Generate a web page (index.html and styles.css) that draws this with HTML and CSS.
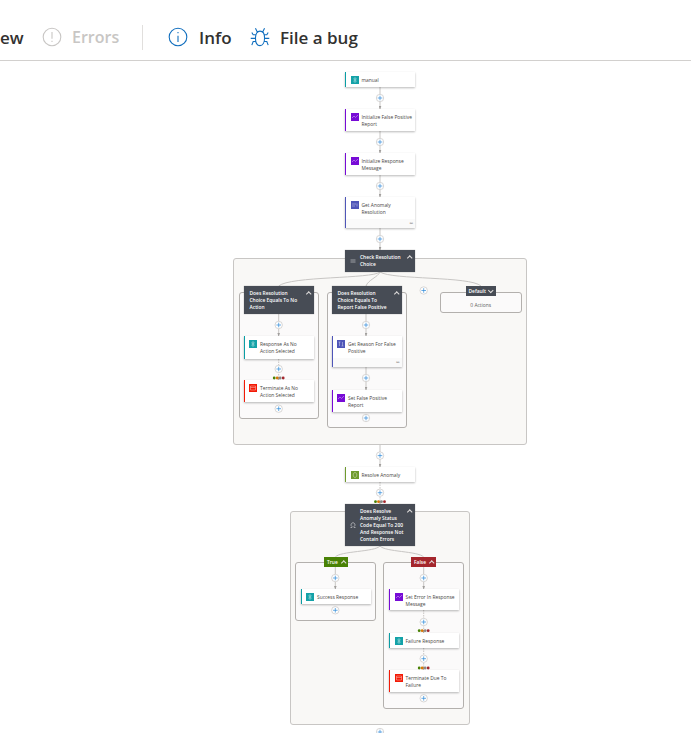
FILE: index.html
```html
<!DOCTYPE html>
<html lang="en">
<head>
    <meta charset="UTF-8">
    <meta name="viewport" content="width=device-width, initial-scale=1.0">
    <title>Logic app designer</title>
    <link rel="stylesheet" href="styles.css">
</head>
<body>
    <header class="toolbar">
        <span class="tool tool-cut">ew</span>
        <span class="tool tool-errors">
            <svg class="tool-icon" viewBox="0 0 22 22"><circle cx="11" cy="11" r="9.7"/><path d="M11 5.500v7.500M11 15.200v1.400"/></svg>
            Errors
        </span>
        <span class="divider"></span>
        <span class="tool tool-info">
            <svg class="tool-icon" viewBox="0 0 22 22"><circle cx="11" cy="11" r="9.7"/><path d="M11 9.500v7M11 5.600v1.400"/></svg>
            Info
        </span>
        <span class="tool tool-bug">
            <svg class="tool-icon bug-icon" viewBox="0 0 22 24"><path d="M11 5.500c3 0 5 3 5 7.500 0 5-2 8.500-5 8.500s-5-3.500-5-8.500c0-4.500 2-7.500 5-7.500zM8 6.500 6 2.500M14 6.500l2-4M6 9.500H3.500L2 7M16 9.500h2.500L20 7M5.800 13.500H.8M16.200 13.500h5M6.500 17H3.500L2 21M15.500 17h3L20 21"/></svg>
            File a bug
        </span>
    </header>

    <main class="canvas">
        <div class="scope scope-switch"></div>
        <div class="branch branch-noaction"></div>
        <div class="branch branch-report"></div>
        <div class="branch branch-default"><span class="empty-note">0 Actions</span></div>
        <div class="scope scope-cond"></div>
        <div class="branch branch-true"></div>
        <div class="branch branch-false"></div>

        <svg class="wires" viewBox="0 61 691 672">
            <defs>
                <marker id="arrow" markerWidth="4" markerHeight="3" refX="3.500" refY="1.500" orient="auto" markerUnits="userSpaceOnUse">
                    <path d="M0 0 4 1.500 0 3z" fill="#a19f9d"/>
                </marker>
                <g id="plus">
                    <circle r="3.700" fill="#fff" stroke="#c8c6c4" stroke-width=".7"/>
                    <path d="M-2.300 0h4.600M0-2.300v4.600" stroke="#2b88d8" stroke-width=".7"/>
                </g>
                <g id="status">
                    <circle cx="-4.500" r="1.400" fill="#498205"/>
                    <circle cx="-1.500" r="1.400" fill="#d97706"/>
                    <circle cx="1.500" r="1.400" fill="#8a8886"/>
                    <circle cx="4.500" r="1.400" fill="#a4262c"/>
                </g>
            </defs>
            <g class="wire">
                <path marker-end="url(#arrow)" d="M380 87V109"/>
                <path marker-end="url(#arrow)" d="M380 131V153"/>
                <path marker-end="url(#arrow)" d="M380 175V197"/>
                <path marker-end="url(#arrow)" d="M380 228V250"/>
                <path d="M380 272C372 279 290 276 278.700 286"/>
                <path d="M380 272C378 277 368 280 366 286"/>
                <path d="M380 272C392 280 470 276 481 286"/>
                <path marker-end="url(#arrow)" d="M278.700 314V336"/>
                <path marker-end="url(#arrow)" d="M366 314V336"/>
                <path marker-end="url(#arrow)" d="M366 367V390"/>
                <path d="M380 445V467" marker-end="url(#arrow)"/>
                <path d="M380 546C375 552 340 551 335.300 557"/>
                <path d="M380 546C385 552 418 551 423.700 557"/>
                <path marker-end="url(#arrow)" d="M335.300 567V589"/>
                <path marker-end="url(#arrow)" d="M423.700 567V589"/>
                <path class="dashed" marker-end="url(#arrow)" d="M278.700 359V380"/>
                <path class="dashed" marker-end="url(#arrow)" d="M380 482V504"/>
                <path class="dashed" marker-end="url(#arrow)" d="M423.700 610V633"/>
                <path class="dashed" marker-end="url(#arrow)" d="M423.700 648V670"/>
            </g>
            <use href="#plus" x="380" y="98"/>
            <use href="#plus" x="380" y="142"/>
            <use href="#plus" x="380" y="186"/>
            <use href="#plus" x="380" y="239"/>
            <use href="#plus" x="278.700" y="325"/>
            <use href="#plus" x="366" y="325"/>
            <use href="#plus" x="423.700" y="290.500"/>
            <use href="#plus" x="278.700" y="369"/>
            <use href="#plus" x="278.700" y="408.700"/>
            <use href="#plus" x="366" y="378"/>
            <use href="#plus" x="366" y="418"/>
            <use href="#plus" x="380" y="455.600"/>
            <use href="#plus" x="380" y="492.700"/>
            <use href="#plus" x="335.300" y="578"/>
            <use href="#plus" x="335.300" y="610.300"/>
            <use href="#plus" x="423.700" y="578"/>
            <use href="#plus" x="423.700" y="622"/>
            <use href="#plus" x="423.700" y="658.700"/>
            <use href="#plus" x="423.700" y="698.300"/>
            <use href="#plus" x="380" y="732"/>
            <use href="#status" x="278.700" y="378"/>
            <use href="#status" x="380" y="501.700"/>
            <use href="#status" x="423.700" y="630.700"/>
            <use href="#status" x="423.700" y="668"/>
        </svg>

        <div class="node teal n-manual"><span class="icon"><svg viewBox="0 0 8 8"><path d="M3 2h2v1.500h-2zM3 4.500h2v1.500h-2z"/></svg></span><span class="title">manual</span></div>
        <div class="node purple n-initreport"><span class="icon"><svg viewBox="0 0 8 8"><path d="M1 5 3 3l1.500 1.500L7 2"/></svg></span><span class="title">Initialize False Positive Report</span></div>
        <div class="node purple n-initmsg"><span class="icon"><svg viewBox="0 0 8 8"><path d="M1 5 3 3l1.500 1.500L7 2"/></svg></span><span class="title">Initialize Response Message</span></div>
        <div class="node indigo n-anomaly"><span class="icon"><svg viewBox="0 0 8 8"><path d="M1 3h4M1 5h3M6 2.500v3"/></svg></span><span class="title">Get Anomaly Resolution</span><span class="foot">∞</span></div>

        <div class="card n-switch"><svg class="card-icon" viewBox="0 0 6 6"><path d="M.5 2h5M.5 4h5"/></svg><span class="title">Check Resolution Choice</span><span class="chev"></span></div>
        <div class="card plain n-noaction"><span class="title">Does Resolution Choice Equals To No Action</span><span class="chev"></span></div>
        <div class="card plain n-report"><span class="title">Does Resolution Choice Equals To Report False Positive</span><span class="chev"></span></div>
        <div class="tag dark n-default">Default<span class="chev down"></span></div>

        <div class="node teal n-resp"><span class="icon"><svg viewBox="0 0 8 8"><path d="M3 2h2v1.500h-2zM3 4.500h2v1.500h-2z"/></svg></span><span class="title">Response As No Action Selected</span></div>
        <div class="node red n-term"><span class="icon"><svg viewBox="0 0 8 8"><path d="M1.500 2h5v4h-5zM1.500 3.500h5"/></svg></span><span class="title">Terminate As No Action Selected</span></div>
        <div class="node indigo n-reason"><span class="icon"><svg viewBox="0 0 8 8"><path d="M2.500 2v4M5.500 2v4M1.500 2h2M4.500 6h2"/></svg></span><span class="title">Get Reason For False Positive</span><span class="foot">∞</span></div>
        <div class="node purple n-setreport"><span class="icon"><svg viewBox="0 0 8 8"><path d="M1 5 3 3l1.500 1.500L7 2"/></svg></span><span class="title">Set False Positive Report</span></div>

        <div class="node green n-resolve"><span class="icon"><svg viewBox="0 0 8 8"><path d="M4 1.500a1.800 2.500 0 1 0 .01 0z"/></svg></span><span class="title">Resolve Anomaly</span></div>
        <div class="card n-cond"><svg class="card-icon" viewBox="0 0 6 6"><path d="M.5 5.500h1.500v-1a2 2 0 1 1 2 0v1h1.500"/></svg><span class="title">Does Resolve Anomaly Status Code Equal To 200 And Response Not Contain Errors</span><span class="chev"></span></div>
        <div class="tag yes n-true">True<span class="chev"></span></div>
        <div class="tag no n-false">False<span class="chev"></span></div>

        <div class="node teal n-success"><span class="icon"><svg viewBox="0 0 8 8"><path d="M3 2h2v1.500h-2zM3 4.500h2v1.500h-2z"/></svg></span><span class="title">Success Response</span></div>
        <div class="node purple n-seterror"><span class="icon"><svg viewBox="0 0 8 8"><path d="M1 5 3 3l1.500 1.500L7 2"/></svg></span><span class="title">Set Error In Response Message</span></div>
        <div class="node teal n-failure"><span class="icon"><svg viewBox="0 0 8 8"><path d="M3 2h2v1.500h-2zM3 4.500h2v1.500h-2z"/></svg></span><span class="title">Failure Response</span></div>
        <div class="node red n-termfail"><span class="icon"><svg viewBox="0 0 8 8"><path d="M1.500 2h5v4h-5zM1.500 3.500h5"/></svg></span><span class="title">Terminate Due To Failure</span></div>
    </main>
</body>
</html>
```

FILE: styles.css
```css
html, body {
    margin: 0;
    height: 733px;
    overflow: hidden;
    background: white;
}

body {
    font-family: "Open Sans", "Noto Sans", Arial, sans-serif;
    color: #323130;
}

/* top toolbar */
.toolbar {
    display: flex;
    align-items: center;
    height: 60px;
    padding-top: 14px;
    box-sizing: border-box;
    box-shadow: 0 1px 0 #d2d0ce;
    font-size: 17px;
    font-weight: 600;
    white-space: nowrap;
}

.tool {
    display: flex;
    align-items: center;
}

.tool-cut {
    width: 42px;
}

.tool-errors {
    width: 100px;
    gap: 10px;
    font-size: 16px;
    color: #c8c6c4;
}

.divider {
    width: 1px;
    height: 25px;
    background: #e1dfdd;
    margin-right: 25px;
}

.tool-info {
    width: 82px;
    gap: 11px;
}

.tool-bug {
    gap: 10px;
}

.tool-icon {
    width: 20px;
    height: 20px;
    fill: none;
    stroke: #c8c6c4;
    stroke-width: 1.2;
}

.tool-info .tool-icon,
.bug-icon {
    stroke: #106ebe;
}

.bug-icon {
    width: 20px;
    height: 22px;
}

/* designer canvas, everything below sits on a free canvas */
.canvas {
    position: relative;
    height: 672px;
    margin-top: 1px;
    font-size: 4.9px;
    line-height: 7px;
    overflow: hidden;
}

.wires {
    position: absolute;
    left: 0;
    top: 0;
    width: 691px;
    height: 672px;
}

.wire path {
    fill: none;
    stroke: #c8c6c4;
    stroke-width: 1;
}

.wire .dashed {
    stroke-dasharray: 1.500 1;
}

.scope,
.branch {
    position: absolute;
    box-sizing: border-box;
    border: 1px solid #c8c6c4;
    border-radius: 3px;
}

.scope {
    background: #f9f8f6;
}

.branch {
    background: #fbfafa;
    border-color: #b3b0ad;
}

.scope-switch { left: 232.500px; top: 197px; width: 294.500px; height: 187px; }
.branch-noaction { left: 238.500px; top: 230.500px; width: 80px; height: 127px; }
.branch-report { left: 326.500px; top: 230.500px; width: 80px; height: 136px; }
.branch-default { left: 440px; top: 230.500px; width: 81.500px; height: 21.500px; }
.scope-cond { left: 290px; top: 450px; width: 180px; height: 214px; }
.branch-true { left: 295px; top: 501px; width: 81px; height: 59px; }
.branch-false { left: 383px; top: 501px; width: 81px; height: 147px; }

.empty-note {
    position: absolute;
    left: 0;
    right: 0;
    top: 9px;
    text-align: center;
    color: #605e5c;
}

/* action nodes */
.node {
    position: absolute;
    box-sizing: border-box;
    width: 70px;
    display: flex;
    align-items: flex-start;
    gap: 3px;
    padding: 4px 2px 0 4.500px;
    background: white;
    border-left: 1.500px solid #0097a7;
    box-shadow: 0 .5px 2px rgba(0, 0, 0, 0.28);
}

.node .title {
    color: #484644;
    margin-top: .5px;
}

.icon {
    flex: none;
    width: 8px;
    height: 8px;
    background: #0097a7;
}

.icon svg {
    display: block;
    fill: none;
    stroke: white;
    stroke-width: .5;
    opacity: .75;
}

.teal { border-left-color: #0a9ea5; }
.teal .icon { background: #14a2a8; }
.purple { border-left-color: #770bd6; }
.purple .icon { background: #770bd6; }
.indigo { border-left-color: #4f56b8; }
.indigo .icon { background: #4f56b8; }
.red { border-left-color: #f31b07; }
.red .icon { background: #f31b07; }
.green { border-left-color: #6f9a2e; }
.green .icon { background: #6f9a2e; }

.foot {
    position: absolute;
    left: 0;
    right: 0;
    bottom: 0;
    height: 9px;
    padding-right: 2px;
    box-sizing: border-box;
    background: #fafafa;
    text-align: right;
    line-height: 9px;
    color: #8a8886;
}

.n-manual { left: 345px; top: 11px; height: 15px; }
.n-initreport { left: 345px; top: 48px; height: 22px; }
.n-initmsg { left: 345px; top: 92px; height: 22px; }
.n-anomaly { left: 345px; top: 136px; height: 31px; }
.n-resp { left: 243.500px; top: 275px; height: 23px; }
.n-term { left: 243.500px; top: 319px; height: 22px; }
.n-reason { left: 331.500px; top: 275px; height: 31px; }
.n-setreport { left: 331.500px; top: 329px; height: 22px; }
.n-resolve { left: 345px; top: 406px; height: 15px; }
.n-success { left: 300.500px; top: 528px; height: 15px; }
.n-seterror { left: 389px; top: 528px; height: 21px; }
.n-failure { left: 389px; top: 572px; height: 15px; }
.n-termfail { left: 389px; top: 609px; height: 22px; }

/* dark scope headers */
.card {
    position: absolute;
    box-sizing: border-box;
    width: 70px;
    padding: 3.500px 9px 0 15px;
    background: #474c55;
    color: white;
    font-weight: 600;
    box-shadow: 0 0 1px rgba(0, 0, 0, 0.4);
}

.card.plain {
    padding-left: 6px;
}

.card-icon {
    position: absolute;
    left: 5px;
    width: 6px;
    height: 6px;
    fill: none;
    stroke: white;
    stroke-width: .6;
    opacity: .8;
}

.chev {
    position: absolute;
    right: 3.500px;
    top: 6px;
    width: 3.500px;
    height: 3.500px;
    box-sizing: border-box;
    border-left: .4px solid #e1dfdd;
    border-top: .4px solid #e1dfdd;
    transform: rotate(45deg);
}

.chev.down {
    top: 3px;
    transform: rotate(225deg);
}

.n-switch { left: 345px; top: 189px; height: 22px; }
.n-switch .card-icon { top: 8px; }
.n-noaction { left: 243.500px; top: 225px; height: 28px; }
.n-report { left: 331.500px; top: 225px; height: 28px; }
.n-cond { left: 345px; top: 443px; height: 42px; }
.n-cond .card-icon { top: 17.500px; }

/* branch labels */
.tag {
    position: absolute;
    box-sizing: border-box;
    height: 10px;
    padding-left: 3px;
    color: white;
    font-weight: 600;
    line-height: 10px;
}

.tag .chev {
    top: 4px;
    right: 3px;
}

.dark { background: #474c55; }
.yes { background: #498205; }
.no { background: #a4262c; }

.n-default { left: 465.500px; top: 225px; width: 30px; }
.n-default .chev { top: 2.500px; }
.n-true { left: 324px; top: 496px; width: 24px; }
.n-false { left: 411px; top: 496px; width: 25px; }
```
